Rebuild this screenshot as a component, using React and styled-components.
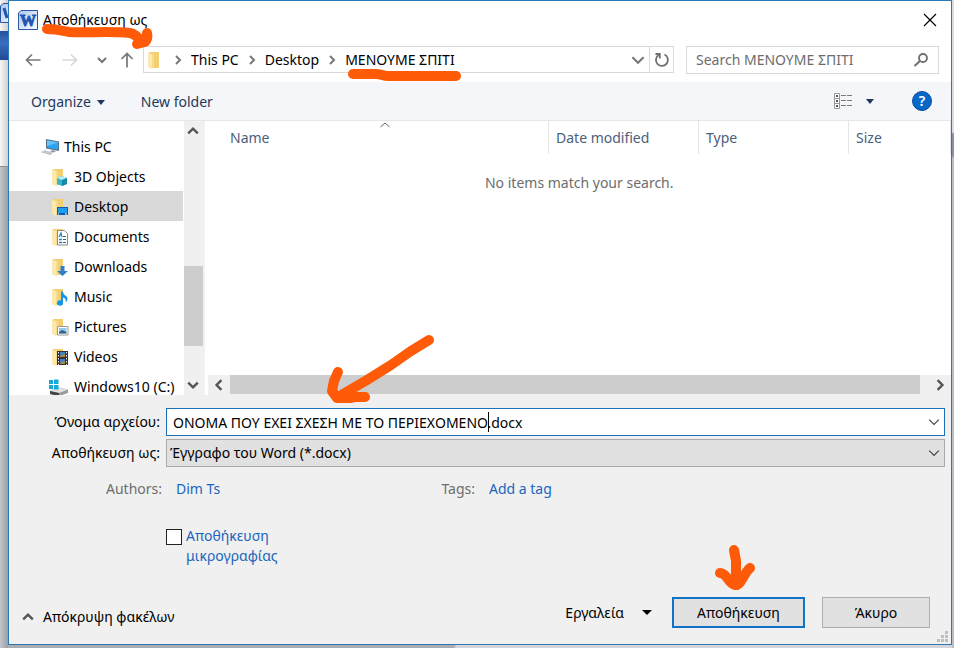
import React from "react";
import styled, { createGlobalStyle, css } from "styled-components";

const Global = createGlobalStyle`
  *, *::before, *::after { box-sizing: border-box; }
  body { margin: 0; font-family: "Noto Sans", "Open Sans", sans-serif; font-size: 14px; line-height: 20px; color: #000; }
  button, input, select { font: inherit; color: inherit; margin: 0; }
  button { padding: 0; border: 0; background: none; }
  a { text-decoration: none; }
  svg { display: block; flex: none; }
`;

/* ---------- window frame ---------- */

const Desktop = styled.div`
  position: relative;
  height: 100vh;
  padding: 0 2px 3px 8px;
  overflow: hidden;
  background:
    linear-gradient(#23519c, #3a6fc0 40%, #1f4a94) 0 31px / 8px 29px no-repeat,
    linear-gradient(90deg, #f6f6f6, #cfcfcf) 0 0 / 8px 166px no-repeat,
    linear-gradient(#8b9098, #8b9098) 0 166px / 8px 1px no-repeat,
    linear-gradient(90deg, #c3c6cb, #9a9fa6) 0 167px / 8px 100% no-repeat,
    linear-gradient(#d9dde3 0 132px, #8a93a3 134px 156px, #b9bfc9 158px) 100% 0 / 2px 100% no-repeat,
    linear-gradient(90deg, #a9adb2 0 454px, #d3d5d8 456px);
`;

const Behind = styled.div`
  position: absolute;
  left: 0;
  top: 3px;
  width: 8px;
  overflow: hidden;
`;

const Dialog = styled.main`
  position: relative;
  display: flex;
  flex-direction: column;
  height: 100%;
  border: 1px solid #2b78b5;
  background: #fff;
`;

const TitleBar = styled.header`
  display: flex;
  align-items: center;
  gap: 5px;
  height: 38px;
  padding: 0 13px 0 9px;
`;

const Title = styled.h1`
  flex: 1;
  margin: 0;
  font-size: 14px;
  font-weight: 400;
`;

const IconButton = styled.button`
  display: flex;
  align-items: center;
  justify-content: center;
  width: ${(p) => p.$w || 16}px;
  height: ${(p) => p.$h || 20}px;
  flex: none;
`;

/* ---------- navigation ---------- */

const NavRow = styled.nav`
  display: flex;
  align-items: center;
  height: 43px;
  padding: 0 12px 2px 14px;
`;

const Arrows = styled.div`
  display: flex;
  justify-content: space-between;
  align-items: center;
  width: 112px;
  margin-right: 8px;
`;

const AddressBar = styled.div`
  display: flex;
  flex: 1;
  align-items: center;
  height: 27px;
  border: 1px solid #d9d9d9;
`;

const Crumbs = styled.ol`
  display: flex;
  flex: 1;
  align-items: center;
  margin: 0;
  padding: 0 0 0 3px;
  list-style: none;
`;

const Crumb = styled.li`
  display: flex;
  align-items: center;
  gap: 8px;
  margin-right: 8px;
  white-space: nowrap;
`;

const CrumbButton = styled.button`
  white-space: nowrap;
`;

const Refresh = styled(IconButton)`
  width: 24px;
  height: 25px;
  border-left: 1px solid #d9d9d9;
`;

const SearchBox = styled.label`
  display: flex;
  align-items: center;
  width: 253px;
  height: 28px;
  margin-left: 12px;
  padding: 0 9px;
  border: 1px solid #d9d9d9;
`;

const SearchInput = styled.input`
  flex: 1;
  min-width: 0;
  padding: 0;
  border: 0;
  outline: 0;
  background: none;
  &::placeholder { color: #6d6d6d; opacity: 1; }
`;

/* ---------- command bar ---------- */

const CommandBar = styled.div`
  display: flex;
  align-items: center;
  height: 39px;
  padding: 0 19px 0 22px;
  border-bottom: 1px solid #e3e6ea;
  background: #f4f6f9;
  color: #1e395b;
`;

const Command = styled.button`
  display: flex;
  align-items: center;
  gap: 6px;
  margin-right: 36px;
  padding-top: 2px;
`;

const CommandEnd = styled.div`
  display: flex;
  align-items: center;
  gap: 14px;
  margin-left: auto;
`;

const HelpButton = styled.button`
  width: 20px;
  height: 20px;
  margin-left: 24px;
  border: 1px solid #0a4d9c;
  border-radius: 50%;
  background: #0868c8;
  color: #fff;
  font-size: 14px;
  font-weight: 600;
  line-height: 18px;
`;

/* ---------- browser ---------- */

const Browser = styled.section`
  display: flex;
  flex: 1;
  min-height: 0;
`;

const Sidebar = styled.aside`
  display: flex;
  width: 196px;
  margin-right: 3px;
  overflow: hidden;
  border-right: 1px solid #f3f3f3;
`;

const Tree = styled.ul`
  flex: 1;
  margin: 0 1px 0 0;
  padding: 10px 0 0;
  overflow: hidden;
  list-style: none;
`;

const TreeItem = styled.button`
  display: flex;
  align-items: center;
  gap: ${(p) => (p.$root ? 4 : 5)}px;
  width: 100%;
  height: 30px;
  padding-top: 2px;
  padding-left: ${(p) => (p.$root ? 31 : p.$drive ? 40 : 42)}px;
  white-space: nowrap;
  background: ${(p) => (p.$active ? "#d9d9d9" : "transparent")};
`;

const ScrollTrack = styled.div`
  display: flex;
  flex: none;
  background: #f0f0f0;
  ${(p) =>
    p.$vertical
      ? css`flex-direction: column; width: 20px;`
      : css`height: 20px;`}
`;

const ScrollSpace = styled.div`
  flex: ${(p) => p.$grow};
`;

const ScrollThumb = styled.div`
  flex: ${(p) => p.$grow};
  margin: ${(p) => (p.$vertical ? "0 1px 0 0" : "0 0 1px")};
  background: #cdcdcd;
`;

const Files = styled.div`
  display: flex;
  flex: 1;
  flex-direction: column;
  min-width: 0;
`;

const FileTable = styled.table`
  width: 100%;
  border-collapse: collapse;
  table-layout: fixed;
`;

const HeadCell = styled.th`
  position: relative;
  width: ${(p) => (p.$w ? `${p.$w}px` : "auto")};
  height: 33px;
  padding: 0 0 0 ${(p) => p.$pad || 7}px;
  border-right: 1px solid #e5e5e5;
  color: #4c607a;
  font-weight: 400;
  text-align: left;
`;

const SortMark = styled.svg`
  position: absolute;
  top: 1px;
  right: 157px;
`;

const EmptyCell = styled.td`
  padding: 19px 0 0;
  color: #6d6d6d;
  text-align: center;
`;

const Filler = styled.div`
  flex: 1;
`;

/* ---------- form ---------- */

const SaveForm = styled.form`
  display: flex;
  flex-direction: column;
  height: 249px;
  padding: 13px 6px 16px 0;
  background: #f0f0f0;
`;

const FieldRow = styled.div`
  display: flex;
  align-items: center;
  gap: 6px;
  margin-bottom: 3px;
`;

const FieldLabel = styled.label`
  width: 151px;
  text-align: right;
  white-space: nowrap;
`;

const Combo = styled.div`
  position: relative;
  display: flex;
  flex: 1;
  align-items: center;
  height: 28px;
  padding-right: 2px;
  border: 1px solid ${(p) => (p.$active ? "#1a6fb8" : "#a9a9a9")};
  background: ${(p) => (p.$active ? "#fff" : "#e1e1e1")};
`;

const NameInput = styled.input`
  flex: 1;
  min-width: 0;
  height: 26px;
  padding: 0 0 0 6px;
  border: 0;
  outline: 0;
  background: none;
`;

const Caret = styled.span`
  position: absolute;
  top: 3px;
  left: 321px;
  width: 1px;
  height: 20px;
  background: #000;
`;

const TypeSelect = styled.select`
  flex: 1;
  height: 26px;
  padding: 0 0 0 3px;
  border: 0;
  outline: 0;
  appearance: none;
  background: none;
`;

const MetaRow = styled.dl`
  display: flex;
  gap: 14px;
  margin: 9px 0 0;
`;

const MetaLabel = styled.dt`
  width: ${(p) => p.$w}px;
  color: #6d6d6d;
  text-align: right;
`;

const MetaValue = styled.dd`
  width: ${(p) => p.$w}px;
  margin: 0;
  white-space: nowrap;
`;

const MetaLink = styled.a`
  color: #1a66bd;
`;

const ThumbRow = styled.div`
  display: flex;
  gap: 4px;
  margin: 27px 0 0 157px;
`;

const CheckBox = styled.input`
  appearance: none;
  width: 16px;
  height: 16px;
  margin: 3px 0 0;
  border: 1px solid #222;
  background: #fff;
`;

const CheckLabel = styled.label`
  width: 110px;
  color: #1a66bd;
`;

const ActionRow = styled.div`
  display: flex;
  align-items: center;
  margin-top: auto;
  padding: 0 15px 0 13px;
`;

const HideFolders = styled.button`
  display: flex;
  align-items: center;
  gap: 9px;
  margin: 8px auto 0 0;
`;

const Tools = styled.button`
  display: flex;
  align-items: center;
  gap: 18px;
  margin-right: 20px;
`;

const ActionButton = styled.button`
  width: ${(p) => (p.$primary ? 133 : 108)}px;
  height: 31px;
  margin-right: ${(p) => (p.$primary ? 17 : 0)}px;
  border: ${(p) => (p.$primary ? "2px solid #1173c5" : "1px solid #adadad")};
  background: #e1e1e1;
`;

const Grip = styled.svg`
  position: absolute;
  right: 3px;
  bottom: 2px;
`;

const Annotations = styled.svg`
  position: absolute;
  top: 0;
  left: 0;
  pointer-events: none;
`;

/* ---------- icons ---------- */

const WordPlate = ({ children }) => (
  <svg width="20" height="20" viewBox="0 0 20 20" aria-hidden="true">
    <defs>
      <linearGradient id="wordBg" x1="0" y1="0" x2="1" y2="1">
        <stop offset="0" stopColor="#a9c6ee" />
        <stop offset=".6" stopColor="#dfeafa" />
        <stop offset="1" stopColor="#f8fbff" />
      </linearGradient>
    </defs>
    <path d="M3 .5h16.500v19H.5V3z" fill="url(#wordBg)" stroke="#2c57a6" />
    {children}
  </svg>
);

const WordIcon = () => (
  <WordPlate>
    <text x="10" y="15.500" textAnchor="middle" fontFamily="Liberation Serif" fontWeight="700" fontSize="16" fill="#1d57b0" stroke="#1d57b0" strokeWidth=".9">W</text>
  </WordPlate>
);

const Chevron = ({ dir = "down", w = 10, color = "#555", sw = 2 }) => {
  const turn = { down: 0, left: 90, up: 180, right: 270 }[dir];
  return (
    <svg width={w} height={w} viewBox="0 0 10 10" aria-hidden="true">
      <path d="M1 3l4 4 4-4" fill="none" stroke={color} strokeWidth={sw} transform={`rotate(${turn} 5 5)`} />
    </svg>
  );
};

const LongArrow = ({ color, turn = 0 }) => (
  <svg width="16" height="16" viewBox="0 0 16 16" aria-hidden="true">
    <path d="M15.500 8H1.500M7 2.500L1.500 8 7 13.500" fill="none" stroke={color} strokeWidth="1.700" transform={`rotate(${turn} 8 8)`} />
  </svg>
);

const Triangle = ({ color = "#1e395b", w = 8 }) => (
  <svg width={w} height="5" viewBox="0 0 8 5" preserveAspectRatio="none" aria-hidden="true">
    <path d="M0 0h8L4 5z" fill={color} />
  </svg>
);

const FolderBase = () => (
  <>
    <path d="M2 1h10v16H2z" fill="#f3cf72" />
    <path d="M1 1.500l4 1.500v15l-4-2z" fill="#fbe8ae" />
    <path d="M5 3h2v13l-2 2z" fill="#f8dc8e" />
  </>
);

const overlays = {
  none: null,
  objects: (
    <>
      <path d="M6 10l5-2 5 2v6l-5 2-5-2z" fill="#35b4cf" />
      <path d="M6 10l5-2 5 2-5 2z" fill="#b5edf5" />
      <path d="M11 12l5-2v6l-5 2z" fill="#168ba9" />
    </>
  ),
  desktop: (
    <>
      <path d="M6 9h11v8H6z" fill="#0b5fae" />
      <path d="M7 10h9v5H7z" fill="#1e9df0" />
      <path d="M7 16h1m6 0h2" stroke="#fff" />
    </>
  ),
  documents: (
    <>
      <path d="M6.500 2.500h7l3 3v11.500h-10z" fill="#fff" stroke="#8c8c8c" />
      <path d="M8 9l2-4 1 4M8 11.500h3M8 14.500h3" fill="none" stroke="#2583c4" strokeWidth="1.300" />
      <path d="M12 8.500h3M12 11.500h3M12 14.500h3" stroke="#356277" />
    </>
  ),
  downloads: <path d="M9.500 8h4v5H17l-5.500 5L6 13h3.500z" fill="#2f7fc9" />,
  music: (
    <>
      <path d="M10 3.500h2c0 4 4.500 4 4.500 7 0 2-1 3-2 4 .5-3 0-4-2.500-5V15h-2z" fill="#1596e8" />
      <ellipse cx="9" cy="15" rx="3" ry="2.700" fill="#1596e8" />
    </>
  ),
  pictures: (
    <>
      <path d="M6.500 8.500h10.500v8.500H6.500z" fill="#fff" stroke="#9a9a9a" />
      <path d="M8 10h7.500v5.500H8z" fill="#8ec9ee" />
      <path d="M8 14l3-2 4.500 2v1.500H8z" fill="#38607c" />
    </>
  ),
  videos: (
    <>
      <path d="M6 3h11v14H6z" fill="#333" />
      <path d="M9 4h5v5H9z" fill="#457fc1" />
      <path d="M9 11h5v5H9z" fill="#457fc1" />
      <path d="M9 8l5-2v3H9zM9 15l5-2v3H9z" fill="#b0893d" />
      <path d="M7.500 4v13M15.500 4v13" stroke="#e8e8e8" strokeDasharray="1.500 1.500" />
    </>
  ),
};

const FolderIcon = ({ kind = "none" }) => (
  <svg width="18" height="18" viewBox="0 0 18 18" aria-hidden="true">
    <FolderBase />
    {overlays[kind]}
  </svg>
);

const PcIcon = () => (
  <svg width="20" height="18" viewBox="0 0 20 18" aria-hidden="true">
    <path d="M6 1l13 2.500v9.500L6 10.500z" fill="#56748d" />
    <path d="M7 2.200l11 2.200v7.200L7 9.500z" fill="#2ba4f3" />
    <path d="M7 2.200l11 2.200L7 8z" fill="#6ac2fa" />
    <path d="M12 12l4 1-2 1.500-4-1z" fill="#8a97a3" />
    <path d="M0 14l5-2 9 2.500-4 2.500z" fill="#d4dae0" />
    <path d="M2 14l9 2.500M4 13l8 2.500" stroke="#a3acb5" strokeWidth=".6" />
  </svg>
);

const DriveIcon = () => (
  <svg width="20" height="18" viewBox="0 0 20 18" aria-hidden="true">
    <path d="M1 13l7-4 11 2.500V15l-9 3-9-2z" fill="#9a9a9a" />
    <path d="M1 13l7-4 11 2.500-9 3.500z" fill="#e1e1e1" />
    <path d="M1 13l9 2v3l-9-2z" fill="#444" />
    <path d="M0 2h4v4H0zM5 1.500h4.500V6H5zM0 7h4v4H0zM5 7h4.500v4.500H5z" fill="#16a9dc" />
  </svg>
);

const places = [
  ["3D Objects", "objects"],
  ["Desktop", "desktop"],
  ["Documents", "documents"],
  ["Downloads", "downloads"],
  ["Music", "music"],
  ["Pictures", "pictures"],
  ["Videos", "videos"],
];

const path = ["This PC", "Desktop", "ΜΕΝΟΥΜΕ ΣΠΙΤΙ"];

export default function App() {
  return (
    <Desktop>
      <Global />
      <Behind>
        <WordPlate><path d="M4 5l3 10" stroke="#1d57b0" strokeWidth="3" /></WordPlate>
      </Behind>
      <Dialog>
        <TitleBar>
          <WordIcon />
          <Title>Αποθήκευση ως</Title>
          <IconButton aria-label="Close">
            <svg width="14" height="14" viewBox="0 0 14 14" aria-hidden="true">
              <path d="M1 1l12 12M13 1L1 13" stroke="#000" strokeWidth="1.200" />
            </svg>
          </IconButton>
        </TitleBar>

        <NavRow aria-label="Location">
          <Arrows>
            <IconButton aria-label="Back" $w={20}><LongArrow color="#777" /></IconButton>
            <IconButton aria-label="Forward" $w={28}><LongArrow color="#d8d8d8" turn={180} /></IconButton>
            <IconButton aria-label="Recent" $w={8}><Chevron color="#777" /></IconButton>
            <IconButton aria-label="Up"><LongArrow color="#777" turn={90} /></IconButton>
          </Arrows>
          <AddressBar>
            <Crumbs>
              <Crumb><FolderIcon /></Crumb>
              {path.map((name) => (
                <Crumb key={name}>
                  <Chevron dir="right" color="#777" />
                  <CrumbButton>{name}</CrumbButton>
                </Crumb>
              ))}
            </Crumbs>
            <IconButton aria-label="Previous locations" $w={22}><Chevron w={14} color="#777" sw={1.5} /></IconButton>
            <Refresh aria-label="Refresh">
              <svg width="16" height="16" viewBox="0 0 16 16" aria-hidden="true">
                <path d="M10.500 2.500a6 6 0 1 1-6 .5M1.500 2h4.300v4.500" fill="none" stroke="#6f6f6f" strokeWidth="1.800" />
              </svg>
            </Refresh>
          </AddressBar>
          <SearchBox>
            <SearchInput type="text" aria-label="Search" placeholder="Search ΜΕΝΟΥΜΕ ΣΠΙΤΙ" />
            <svg width="16" height="16" viewBox="0 0 16 16" aria-hidden="true">
              <circle cx="10" cy="6" r="4" fill="none" stroke="#6f6f6f" strokeWidth="1.800" />
              <path d="M7 9l-5.500 5" stroke="#6f6f6f" strokeWidth="2" />
            </svg>
          </SearchBox>
        </NavRow>

        <CommandBar>
          <Command>Organize <Triangle /></Command>
          <Command>New folder</Command>
          <CommandEnd>
            <IconButton aria-label="View" $w={18}>
              <svg width="18" height="16" viewBox="0 0 18 16" aria-hidden="true">
                <path d="M.5.5h5v15h-5zM.5 5.500h5M.5 10.500h5" fill="#fff" stroke="#999" />
                <path d="M2 3h2M2 8h2M2 13h2" stroke="#555" strokeWidth="2" />
                <path d="M7 2.500h5m1 0h5M7 7.500h5m1 0h5M7 12.500h5m1 0h5" stroke="#7b7b7b" />
              </svg>
            </IconButton>
            <IconButton aria-label="More views" $w={8}><Triangle /></IconButton>
            <HelpButton aria-label="Help">?</HelpButton>
          </CommandEnd>
        </CommandBar>

        <Browser>
          <Sidebar>
            <Tree>
              <li><TreeItem $root><PcIcon />This PC</TreeItem></li>
              {places.map(([name, kind]) => (
                <li key={name}>
                  <TreeItem $active={name === "Desktop"}><FolderIcon kind={kind} />{name}</TreeItem>
                </li>
              ))}
              <li><TreeItem $drive><DriveIcon />Windows10 (C:)</TreeItem></li>
            </Tree>
            <ScrollTrack $vertical>
              <IconButton aria-label="Scroll up" $w={18}><Chevron dir="up" w={12} /></IconButton>
              <ScrollSpace $grow={125} />
              <ScrollThumb $grow={80} $vertical />
              <ScrollSpace $grow={29} />
              <IconButton aria-label="Scroll down" $w={18}><Chevron w={12} /></IconButton>
            </ScrollTrack>
          </Sidebar>
          <Files>
            <FileTable>
              <thead>
                <tr>
                  <HeadCell $pad={22}>
                    Name
                    <SortMark width="12" height="6" viewBox="0 0 12 6" aria-hidden="true">
                      <path d="M1.500 5L6 1l4.500 4" fill="none" stroke="#666" />
                    </SortMark>
                  </HeadCell>
                  <HeadCell $w={150}>Date modified</HeadCell>
                  <HeadCell $w={150}>Type</HeadCell>
                  <HeadCell $w={102}>Size</HeadCell>
                </tr>
              </thead>
              <tbody>
                <tr><EmptyCell colSpan={4}>No items match your search.</EmptyCell></tr>
              </tbody>
            </FileTable>
            <Filler />
            <ScrollTrack>
              <IconButton aria-label="Scroll left" $w={22}><Chevron dir="left" w={12} /></IconButton>
              <ScrollThumb $grow={1} />
              <ScrollSpace $grow="0 0 9px" />
              <IconButton aria-label="Scroll right" $w={22}><Chevron dir="right" w={12} /></IconButton>
            </ScrollTrack>
          </Files>
        </Browser>

        <SaveForm onSubmit={(e) => e.preventDefault()}>
          <FieldRow>
            <FieldLabel htmlFor="file-name">Όνομα αρχείου:</FieldLabel>
            <Combo $active>
              <NameInput id="file-name" type="text" defaultValue="ΟΝΟΜΑ ΠΟΥ ΕΧΕΙ ΣΧΕΣΗ ΜΕ ΤΟ ΠΕΡΙΕΧΟΜΕΝΟ.docx" />
              <Caret />
              <IconButton type="button" aria-label="Recent names"><Chevron w={12} color="#444" sw={1} /></IconButton>
            </Combo>
          </FieldRow>
          <FieldRow>
            <FieldLabel htmlFor="file-type">Αποθήκευση ως:</FieldLabel>
            <Combo>
              <TypeSelect id="file-type"><option>Έγγραφο του Word (*.docx)</option></TypeSelect>
              <IconButton as="span"><Chevron w={12} color="#444" sw={1} /></IconButton>
            </Combo>
          </FieldRow>
          <MetaRow>
            <MetaLabel $w={153}>Authors:</MetaLabel>
            <MetaValue $w={239}><MetaLink href="#authors">Dim Ts</MetaLink></MetaValue>
            <MetaLabel $w={46}>Tags:</MetaLabel>
            <MetaValue $w={120}><MetaLink href="#tags">Add a tag</MetaLink></MetaValue>
          </MetaRow>
          <ThumbRow>
            <CheckBox type="checkbox" id="thumbnail" />
            <CheckLabel htmlFor="thumbnail">Αποθήκευση μικρογραφίας</CheckLabel>
          </ThumbRow>
          <ActionRow>
            <HideFolders type="button"><Chevron dir="up" w={12} />Απόκρυψη φακέλων</HideFolders>
            <Tools type="button">Εργαλεία <Triangle color="#000" w={10} /></Tools>
            <ActionButton $primary type="submit">Αποθήκευση</ActionButton>
            <ActionButton type="button">Άκυρο</ActionButton>
          </ActionRow>
        </SaveForm>
        <Grip width="11" height="11" viewBox="0 0 11 11" aria-hidden="true">
          <path d="M8 0h3v3H8zM4 4h3v3H4zM8 4h3v3H8zM0 8h3v3H0zM4 8h3v3H4zM8 8h3v3H8z" fill="#bfbfbf" />
        </Grip>
      </Dialog>
      <Annotations width="954" height="648" viewBox="0 0 954 648" aria-hidden="true">
        <g fill="none" stroke="#ff5a08" strokeWidth="10" strokeLinecap="round" strokeLinejoin="round">
          <path d="M47 29c8 0 12 1 22 3 20 1 40-1 61 1 5 1 8 4 11 9M147 33c1 4 0 7-2 9l-8 2 4-5" />
          <path d="M353 74h23c5 0 7 2 12 2h68" />
          <path d="M429 340l-18 11-20 14-24 15-29 17" />
          <path d="M338 372l-4 9-2 10 5 7h13l5-1h10" />
          <path d="M734 550l2 11v24M720 573c7 0 8 10 15 12 6 1 8-11 15-17M730 579l6 6 5-6" />
        </g>
      </Annotations>
    </Desktop>
  );
}
